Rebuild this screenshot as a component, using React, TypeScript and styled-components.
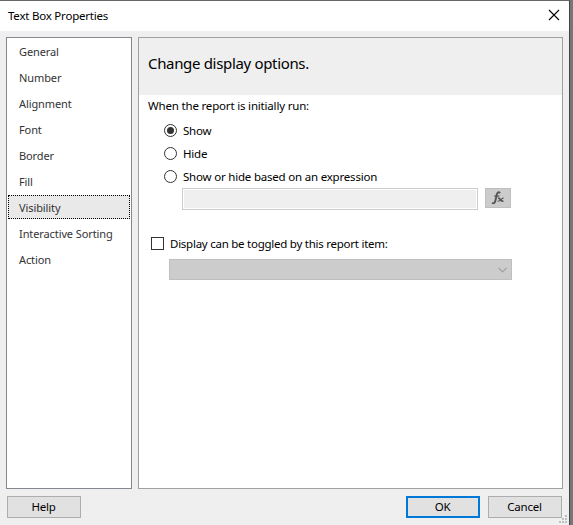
import { PropsWithChildren } from "react";
import styled, { createGlobalStyle } from "styled-components";

const GlobalStyle = createGlobalStyle`
  * {
    box-sizing: border-box;
  }

  body {
    margin: 0;
    overflow: hidden;
    background: #777;
    font-family: "Noto Sans", "Open Sans", sans-serif;
    font-size: 11.5px;
    color: #000;
  }
`;

const Window = styled.div`
  display: flex;
  flex-direction: column;
  width: 570px;
  height: 525px;
  border-top: 1px solid #666;
  border-right: 1px solid #444;
  background: #efefef;
`;

const TitleBar = styled.header`
  display: flex;
  align-items: center;
  justify-content: space-between;
  height: 30px;
  padding: 0 9px 1px 8px;
  background: #fff;
`;

const Label = styled.span<{ size?: number; spacing?: number; tone?: string }>`
  font-size: ${({ size }) => size ?? 11.5}px;
  letter-spacing: ${({ spacing }) => spacing ?? -0.2}px;
  color: ${({ tone }) => tone ?? "#000"};
  line-height: 16px;
  white-space: nowrap;
`;

const Body = styled.div`
  display: flex;
  gap: 6px;
  height: 452px;
  margin: 6px 6px 0;
`;

const Sidebar = styled.nav`
  width: 126px;
  padding: 1px;
  border: 1px solid #828790;
  background: #fff;
`;

const NavItem = styled.div<{ $selected: boolean }>`
  display: flex;
  align-items: center;
  height: 24px;
  margin-bottom: 2px;
  padding: 2px 0 0 10px;
  border: 1px dotted ${({ $selected }) => ($selected ? "#000" : "transparent")};
  background: ${({ $selected }) => ($selected ? "#e9e9e9" : "#fff")};
`;

const Panel = styled.main`
  width: 425px;
  border: 1px solid #a0a0a0;
  background: #fff;
`;

const PanelHeader = styled.div`
  display: flex;
  align-items: center;
  height: 57px;
  padding: 0 0 8px 9px;
  background: #efefef;
`;

const Options = styled.div`
  display: flex;
  flex-direction: column;
  padding: 3px 0 0 9px;
`;

const RadioGroup = styled.div`
  display: flex;
  flex-direction: column;
  gap: 7px;
  padding: 9px 0 0 16px;
`;

const ChoiceRow = styled.label`
  display: flex;
  align-items: center;
  gap: 6px;
  height: 16px;
`;

const Radio = styled.span<{ $checked?: boolean }>`
  display: flex;
  align-items: center;
  justify-content: center;
  width: 13px;
  height: 13px;
  margin-bottom: 1px;
  border: 1px solid #333;
  border-radius: 50%;

  &::after {
    content: "";
    width: 7px;
    height: 7px;
    border-radius: 50%;
    background: ${({ $checked }) => ($checked ? "#333" : "transparent")};
  }
`;

const Checkbox = styled.span`
  width: 13px;
  height: 13px;
  margin-bottom: 1px;
  border: 1px solid #333;
`;

const ExpressionRow = styled.div`
  display: flex;
  gap: 7px;
  padding: 3px 0 0 34px;
`;

const ExpressionField = styled.div`
  width: 296px;
  height: 22px;
  padding: 1px;
  border: 1px solid #ccc;
  background: #efefef content-box;
`;

const ExpressionButton = styled.div`
  display: flex;
  align-items: center;
  justify-content: center;
  width: 26px;
  height: 20px;
  border: 1px solid #bfbfbf;
  background: #ccc;
`;

const ToggleRow = styled(ChoiceRow)`
  margin: 26px 0 0 3px;
`;

const Select = styled.div`
  display: flex;
  align-items: center;
  justify-content: flex-end;
  width: 343px;
  height: 21px;
  margin: 7px 0 0 21px;
  padding-right: 4px;
  border: 1px solid #bfbfbf;
  background: #ccc;
`;

const Footer = styled.footer`
  display: flex;
  gap: 8px;
  padding: 7px 7px 0;
`;

const Spacer = styled.div`
  flex: 1;
`;

const DialogButton = styled.button<{ $primary?: boolean }>`
  width: 74px;
  height: 22px;
  padding: 0 1px 1px 0;
  border: ${({ $primary }) => ($primary ? "2px solid #0078d7" : "1px solid #adadad")};
  background: #e1e1e1;
  color: #000;
  font: inherit;
  letter-spacing: -0.2px;
  line-height: 1;
`;

const GripIcon = styled.svg`
  position: absolute;
  left: 559px;
  top: 515px;
`;

const CloseSvg = styled.svg`
  margin-bottom: 1px;
`;

const CloseIcon = () => (
  <CloseSvg width="12" height="12" viewBox="0 0 12 12">
    <path d="M1 1L11 11M11 1L1 11" stroke="#000" strokeWidth="1.1" />
  </CloseSvg>
);

const FxIcon = () => (
  <svg width="14" height="14" viewBox="0 0 14 14" fill="none" stroke="#555">
    <path d="M9 2.2C7.8.6 6.4 1.2 5.8 3.5L4.3 10C3.8 12 2.5 12.8 1.2 11.6" strokeWidth="1.9" />
    <path d="M3.2 5H8.4" strokeWidth="1.2" />
    <path d="M7 7.2C9.6 6.4 9 11.2 12.4 10" strokeWidth="1.7" />
    <path d="M12.6 7.2C10.5 6.6 9 11 6.6 10.2" strokeWidth="1.2" />
  </svg>
);

const ChevronIcon = () => (
  <svg width="9" height="6" viewBox="0 0 9 6">
    <path d="M.5 .8L4.5 4.8L8.5 .8" fill="none" stroke="#a0a0a0" strokeWidth="1.2" />
  </svg>
);

const Grip = () => (
  <GripIcon width="8" height="8" fill="#bfbfbf">
    <path d="M6 0h2v2h-2zM3 3h2v2h-2zM6 3h2v2h-2zM0 6h2v2h-2zM3 6h2v2h-2zM6 6h2v2h-2z" />
  </GripIcon>
);

const RadioOption = ({ checked, children }: PropsWithChildren<{ checked?: boolean }>) => (
  <ChoiceRow>
    <Radio $checked={checked} />
    <Label>{children}</Label>
  </ChoiceRow>
);

const pages = [
  "General",
  "Number",
  "Alignment",
  "Font",
  "Border",
  "Fill",
  "Visibility",
  "Interactive Sorting",
  "Action",
];

export default function App() {
  return (
    <>
      <GlobalStyle />
      <Window>
        <TitleBar>
          <Label spacing={-0.22}>Text Box Properties</Label>
          <CloseIcon />
        </TitleBar>
        <Body>
          <Sidebar>
            {pages.map((page) => (
              <NavItem key={page} $selected={page === "Visibility"}>
                <Label size={11} spacing={-0.1} tone="#333">{page}</Label>
              </NavItem>
            ))}
          </Sidebar>
          <Panel>
            <PanelHeader>
              <Label size={15} spacing={-0.33}>Change display options.</Label>
            </PanelHeader>
            <Options>
              <Label spacing={-0.18}>When the report is initially run:</Label>
              <RadioGroup>
                <RadioOption checked>Show</RadioOption>
                <RadioOption>Hide</RadioOption>
                <RadioOption>Show or hide based on an expression</RadioOption>
              </RadioGroup>
              <ExpressionRow>
                <ExpressionField />
                <ExpressionButton>
                  <FxIcon />
                </ExpressionButton>
              </ExpressionRow>
              <ToggleRow>
                <Checkbox />
                <Label spacing={-0.25}>Display can be toggled by this report item:</Label>
              </ToggleRow>
              <Select>
                <ChevronIcon />
              </Select>
            </Options>
          </Panel>
        </Body>
        <Footer>
          <DialogButton>Help</DialogButton>
          <Spacer />
          <DialogButton $primary>OK</DialogButton>
          <DialogButton>Cancel</DialogButton>
        </Footer>
        <Grip />
      </Window>
    </>
  );
}
